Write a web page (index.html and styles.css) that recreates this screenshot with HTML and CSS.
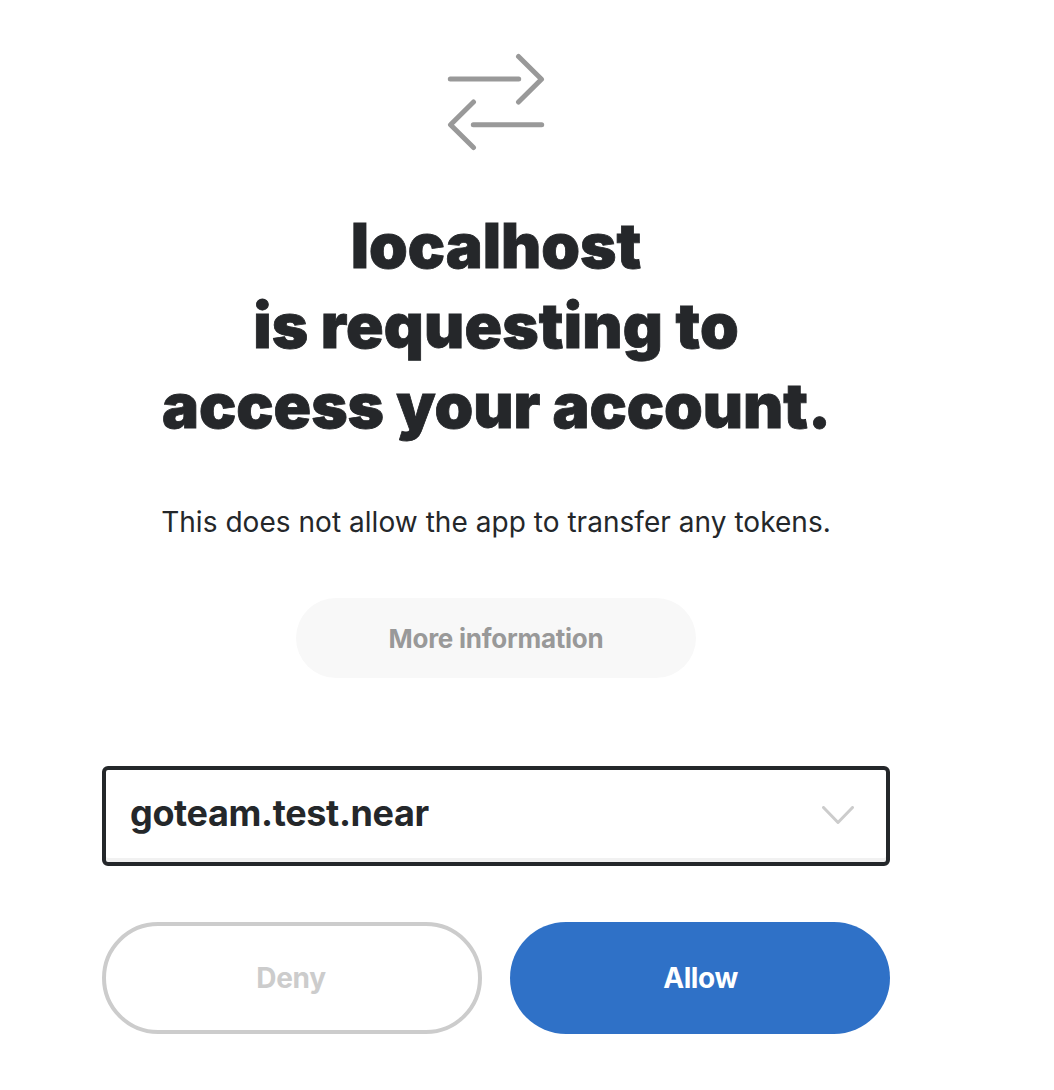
FILE: index.html
```html
<!DOCTYPE html>
<html lang="en">
<head>
<meta charset="utf-8">
<title>Authorize access</title>
<link rel="stylesheet" href="styles.css">
</head>
<body>
<main class="authorize">
  <svg class="transfer-icon" viewBox="0 0 96 96" aria-hidden="true">
    <path d="M2.300 25H70.700M70.500 2.500L93.500 25.200L70.500 48M93.700 70.700H25.300M25.500 48L2.500 70.800L25.500 93.500"/>
  </svg>
  <h1 class="title">
    <span class="line line-host">localhost</span>
    <span class="line line-request">is requesting to</span>
    <span class="line line-access">access your account.</span>
  </h1>
  <p class="note">This does not allow the app to transfer any tokens.</p>
  <button class="more" type="button">More information</button>
  <button class="account" type="button">
    <span>goteam.test.near</span>
    <svg class="chevron" viewBox="0 0 32 18" aria-hidden="true"><path d="M1.500 1.500L16 16.500L30.500 1.500"/></svg>
  </button>
  <div class="actions">
    <button class="action deny" type="button">Deny</button>
    <button class="action allow" type="button">Allow</button>
  </div>
</main>
</body>
</html>
```

FILE: styles.css
```css
* { box-sizing: border-box; }
body {
  margin: 0;
  background: #fff;
  color: #25272a;
  font-family: Inter, "Liberation Sans", sans-serif;
}
button { font-family: inherit; padding: 0; border: 0; }
.authorize {
  width: 788px;
  margin-left: 102px;
  padding-top: 54px;
  display: flex;
  flex-direction: column;
  align-items: center;
}
.transfer-icon { width: 96px; height: 96px; display: block; overflow: visible; }
.transfer-icon path {
  fill: none;
  stroke: #999;
  stroke-width: 5;
  stroke-linecap: round;
  stroke-linejoin: round;
}
.title {
  margin: 56px 0 0;
  font-size: 62px;
  line-height: 80px;
  font-weight: 900;
  text-align: center;
  -webkit-text-stroke: 0.8px #25272a;
}
.line { display: block; white-space: nowrap; }
.line-request { letter-spacing: 0.18px; }
.line-access { letter-spacing: -0.06px; padding-left: 1px; }
.note {
  margin: 56px 0 0;
  font-size: 28px;
  line-height: 40px;
  letter-spacing: 0.04px;
  white-space: nowrap;
  color: #24272a;
}
.more {
  margin-top: 56px;
  width: 400px;
  height: 80px;
  border-radius: 40px;
  background: #f8f8f8;
  color: #999;
  font-size: 26px;
  font-weight: 700;
  letter-spacing: -0.25px;
}
.account {
  margin-top: 88px;
  width: 788px;
  height: 100px;
  padding: 0 32px 6px 24px;
  border: 4px solid #24272a;
  border-radius: 6px;
  background: #fff;
  box-shadow: inset 0 -4px #f1f1f1;
  color: #24272a;
  display: flex;
  align-items: center;
  justify-content: space-between;
  font-size: 36px;
  font-weight: 700;
  letter-spacing: -0.36px;
}
.chevron { width: 32px; height: 18px; margin-top: 4px; }
.chevron path {
  fill: none;
  stroke: #ccc;
  stroke-width: 3;
  stroke-linecap: round;
  stroke-linejoin: round;
}
.actions { margin-top: 56px; display: flex; gap: 28px; }
.action {
  width: 380px;
  height: 112px;
  border-radius: 56px;
  font-size: 28px;
  font-weight: 700;
  letter-spacing: -0.3px;
}
.deny { border: 4px solid #ccc; background: #fff; color: #ccc; padding-right: 2px; }
.allow { background: #2f71c7; color: #fff; padding-left: 1px; letter-spacing: -0.4px; }
```
